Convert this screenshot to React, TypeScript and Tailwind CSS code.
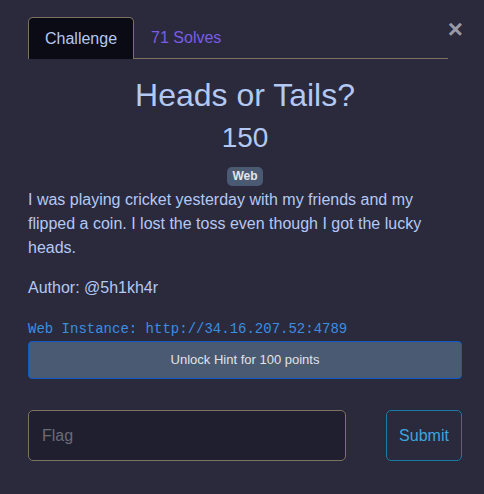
const App = () => {
  return (
    <div className="min-h-[494px] w-full bg-[#2a2a3c] text-[#b4c8f4] font-['Liberation_Sans',Arial,sans-serif] relative">
      <button className="absolute right-[21px] top-[16px] text-[26px] leading-none font-bold text-[#9a9aa6]">
        ×
      </button>
      <div className="pl-[28px] pr-[22px] pt-[17px]">
        {/* tabs */}
        <div className="flex items-end border-b border-[#7d7261] w-[420px]">
          <div className="h-[42px] px-[16px] flex items-center text-[16px] text-[#b4c8f4] bg-[#0a0b14] border border-b-0 border-[#7d7261] rounded-t-[5px] -mb-px">
            Challenge
          </div>
          <div className="h-[41px] px-[17px] flex items-center text-[16px] text-[#7b5ce6]">
            71 Solves
          </div>
        </div>

        <h2 className="text-center text-[32px] leading-[40px] mt-[16px]">Heads or Tails?</h2>
        <div className="text-center text-[28px] leading-[34px] mt-[6px]">150</div>
        <div className="flex justify-center mt-[12px]">
          <span className="bg-[#4a5a72] text-[#e4e4ea] text-[12px] font-bold leading-[19px] px-[5px] rounded-[5px]">
            Web
          </span>
        </div>

        <p className="text-[16px] leading-[24px] mt-[2px]">
          I was playing cricket yesterday with my friends and my flipped a coin. I lost the toss even though I got the lucky heads.
        </p>
        <p className="text-[16px] leading-[24px] mt-[16px]">Author: @5h1kh4r</p>

        <div className="mt-[20px] font-['Liberation_Mono',monospace] text-[14px] leading-[18px] text-[#3a8ee2]">
          Web Instance: http://34.16.207.52:4789
        </div>
        <button className="mt-[3px] w-full h-[38px] bg-[#4a5a72] border border-[#0f5ac4] rounded-[4px] text-[13px] text-[#e2e2e8]">
          Unlock Hint for 100 points
        </button>

        <div className="flex items-stretch justify-between mt-[31px]">
          <input
            placeholder="Flag"
            className="w-[318px] h-[51px] bg-[#1f1f30] border border-[#7d7261] rounded-[5px] px-[13px] text-[16px] text-[#b4c8f4] placeholder:text-[#6b6b76] outline-none"
          />
          <button className="w-[76px] h-[51px] border border-[#1a7aa6] rounded-[5px] text-[16px] text-[#3aa6df]">
            Submit
          </button>
        </div>
      </div>
    </div>
  );
};

export default App;
